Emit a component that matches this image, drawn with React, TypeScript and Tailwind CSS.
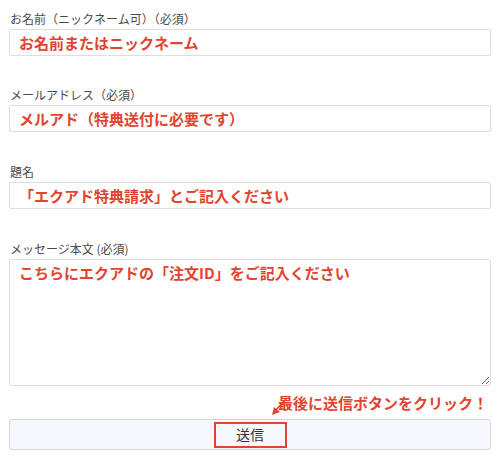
import React from "react"

const font = { fontFamily: '"Noto Sans CJK JP", "Noto Sans", sans-serif' }

const Field: React.FC<{ label: string; value: string; gap?: string }> = ({ label, value, gap = "mb-[31px]" }) => {
  return (
    <div className={gap}>
      <label className="block text-[12px] leading-[16px] text-[#4a4a4a] mb-[2px] pl-[1px]">{label}</label>
      <input
        type="text"
        readOnly
        defaultValue={value}
        className="block w-full h-[27px] px-[9px] border border-[#dedede] rounded-[2px] bg-white text-[15px] font-bold text-[#e1442f] outline-none"
        style={font}
      />
    </div>
  )
}

const App: React.FC = () => {
  return (
    <main className="w-[500px] h-[458px] bg-white px-[9px] pt-[11px]" style={font}>
      <Field label="お名前（ニックネーム可）（必須）" value="お名前またはニックネーム" />
      <Field label="メールアドレス（必須）" value="メルアド（特典送付に必要です）" gap="mb-[32px]" />
      <Field label="題名" value="「エクアド特典請求」とご記入ください" gap="mb-[32px]" />
      <div>
        <label className="block text-[12px] leading-[16px] text-[#4a4a4a] mb-[2px] pl-[1px]">メッセージ本文 (必須)</label>
        <textarea
          readOnly
          defaultValue="こちらにエクアドの「注文ID」をご記入ください"
          className="block w-full h-[127px] px-[9px] py-[3px] border border-[#dedede] rounded-[2px] bg-white text-[15px] leading-[20px] font-bold text-[#e1442f] outline-none"
          style={font}
        />
      </div>
      <div className="relative h-[33px] flex items-center justify-end pr-[3px]">
        <svg className="absolute left-[259px] top-[10px]" width="22" height="22" viewBox="0 0 22 22">
          <line x1="19" y1="2" x2="7" y2="15" stroke="#e1442f" strokeWidth="1.6" />
          <polygon points="4,19 6,11 12,16" fill="#e1442f" />
        </svg>
        <span className="text-[15px] font-bold text-[#e1442f] leading-none">最後に送信ボタンをクリック！</span>
      </div>
      <button
        type="button"
        className="w-full h-[31px] flex items-center justify-center border border-[#d4d6dc] rounded-[3px] bg-[#f7f8fc]"
        style={font}
      >
        <span className="w-[73px] h-[26px] flex items-center justify-center border-2 border-[#e1442f] text-[14px] text-[#333]">送信</span>
      </button>
    </main>
  )
}

export default App
